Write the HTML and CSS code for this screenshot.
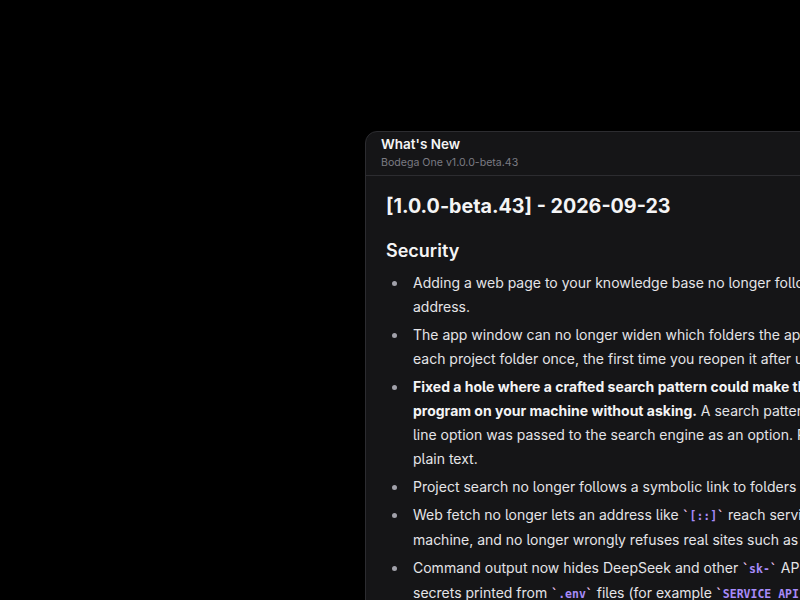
FILE: index.html
```html
<!DOCTYPE html>
<html>
<head>
<meta charset="utf-8">
<link rel="stylesheet" href="styles.css">
</head>
<body>
<div class="stage">
  <section class="dialog">
    <header class="dialog-head">
      <div class="dialog-title">What's New</div>
      <div class="dialog-sub">Bodega One v1.0.0-beta.43</div>
    </header>
    <div class="dialog-body">
      <h1>[1.0.0-beta.43] - 2026-09-23</h1>
      <h2>Security</h2>
      <ul>
        <li>Adding a web page to your knowledge base no longer follows a redirect into a private network address.</li>
        <li>The app window can no longer widen which folders the app may read or write. You now approve each project folder once, the first time you reopen it after updating.</li>
        <li><strong>Fixed a hole where a crafted search pattern could make the app start up and run another program on your machine without asking.</strong> A search pattern starting with a dash like a command-line option was passed to the search engine as an option. Patterns are now always searched as plain text.</li>
        <li>Project search no longer follows a symbolic link to folders outside your project.</li>
        <li>Web fetch no longer lets an address like <code>[::]</code> reach services that are running on your own machine, and no longer wrongly refuses real sites such as fdaxxx.com.</li>
        <li>Command output now hides DeepSeek and other <code>sk-</code> API keys and tokens, and it also hides secrets printed from <code>.env</code> files (for example <code>SERVICE_API_KEY=...</code>).</li>
      </ul>
    </div>
  </section>
</div>
</body>
</html>
```
FILE: styles.css
```css
html, body {
  margin: 0;
  padding: 0;
  background: #000;
  width: 800px;
  height: 600px;
  overflow: hidden;
}
body {
  font-family: Inter, "Noto Sans", sans-serif;
  font-feature-settings: "cv05";
  color: #e4e4e7;
}
.stage {
  padding: 131px 0 0 365px;
}
.dialog {
  width: 720px;
  height: 700px;
  background: #151517;
  border: 1px solid #2c2c30;
  border-radius: 12px;
  box-sizing: border-box;
}
.dialog-head {
  padding: 3px 15px 4px;
  border-bottom: 1px solid #2c2c30;
}
.dialog-title {
  font-size: 13.5px;
  font-weight: 600;
  line-height: 19px;
  color: #f4f4f5;
}
.dialog-sub {
  font-size: 10.6px;
  line-height: 17px;
  color: #7b7b83;
}
.dialog-body {
  padding: 15px 20px 0;
}
h1 {
  margin: 0 0 17px;
  font-size: 19.7px;
  font-weight: 700;
  line-height: 30px;
  color: #f4f4f5;
}
h2 {
  margin: 0 0 7px;
  font-size: 18px;
  font-weight: 600;
  line-height: 26px;
  color: #f4f4f5;
}
ul {
  margin: 0;
  padding: 0 0 0 22px;
}
li {
  font-size: 14px;
  line-height: 24px;
  margin-bottom: 4px;
  padding-left: 5px;
}
li::marker {
  color: #a1a1aa;
}
strong {
  font-weight: 700;
  color: #f4f4f5;
}
code {
  font-family: "DejaVu Sans Mono", monospace;
  font-size: 11.5px;
  font-weight: 700;
  color: #a78bfa;
}
code::before, code::after {
  content: "`";
  color: #eec4f0;
}
```
